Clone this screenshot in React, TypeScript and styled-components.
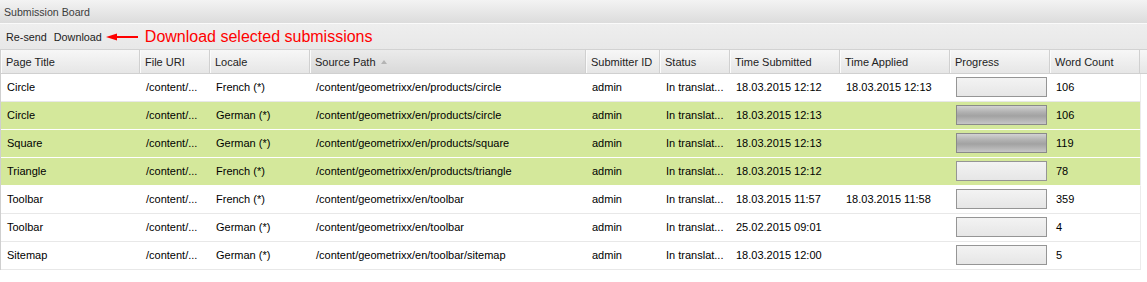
import React from "react";
import styled, { createGlobalStyle } from "styled-components";

const Global = createGlobalStyle`
  html, body { margin: 0; padding: 0; background: #fff; }
  body { font-family: "Liberation Sans", Arial, sans-serif; font-size: 11px; color: #000; }
`;

const COLS = [139, 70, 100, 276, 74, 70, 110, 110, 100, 90];

const Panel = styled.div`
  width: 1147px;
  height: 282px;
  overflow: hidden;
  background: #fff;
`;

const TitleBar = styled.div`
  height: 23px;
  display: flex;
  align-items: center;
  padding-left: 4px;
  background: linear-gradient(#f3f3f3, #dcdcdc);
  border-bottom: 1px solid #fafafa;
  color: #3c3c3c;
  font-size: 10.6px;
`;

const Toolbar = styled.div`
  height: 25px;
  display: flex;
  align-items: center;
  padding-left: 6px;
  background: linear-gradient(#eeeeee, #e8e8e8);
  border-bottom: 1px solid #d2d2d2;
  font-size: 10.8px;
`;

const ToolButton = styled.span`
  color: #222;
  margin-right: 7px;
`;

const Callout = styled.span`
  display: flex;
  align-items: center;
  margin-left: -3px;
`;

const CalloutText = styled.span`
  color: #ff0000;
  font-size: 16px;
  margin-left: 7px;
`;

const Grid = styled.div`
  border-left: 1px solid #cfcfcf;
`;

const HeaderRow = styled.div`
  display: flex;
  height: 23px;
  background: linear-gradient(#f7f7f7, #e6e6e6);
  border-bottom: 1px solid #d0d0d0;
`;

const HeaderCell = styled.div<{ $w: number; $sorted?: boolean }>`
  width: ${(p) => p.$w}px;
  flex: none;
  box-sizing: border-box;
  display: flex;
  align-items: center;
  padding-left: 5px;
  padding-top: 1px;
  color: #222;
  border-right: 1px solid #d0d0d0;
  box-shadow: inset 1px 0 0 #fbfbfb;
  background: ${(p) => (p.$sorted ? "linear-gradient(#ebebeb, #d9d9d9)" : "transparent")};
`;

const SortArrow = styled.span`
  width: 0;
  height: 0;
  margin-left: 5px;
  margin-top: -1px;
  border-left: 3px solid transparent;
  border-right: 3px solid transparent;
  border-bottom: 4px solid #b4b4b4;
`;

const Row = styled.div<{ $sel: boolean }>`
  display: flex;
  width: 1139px;
  height: 27px;
  background: ${(p) => (p.$sel ? "#d4e89b" : "#ffffff")};
  border-bottom: 1px solid ${(p) => (p.$sel ? "#ffffff" : "#e8e8e8")};
  border-right: 1px solid #ececec;
`;

const Cell = styled.div<{ $w: number }>`
  width: ${(p) => p.$w}px;
  flex: none;
  box-sizing: border-box;
  display: flex;
  align-items: center;
  padding-left: 6px;
  padding-bottom: 1px;
  white-space: nowrap;
  overflow: hidden;
  color: #000;
`;

const Progress = styled.div<{ $filled: boolean }>`
  width: 91px;
  height: 20px;
  box-sizing: border-box;
  border: 1px solid ${(p) => (p.$filled ? "#8a8a8a" : "#959595")};
  background: ${(p) =>
    p.$filled
      ? "linear-gradient(#d2d2d2, #b0b0b0 35%, #a2a2a2 55%, #c6c6c6)"
      : "linear-gradient(#f3f3f3, #e6e6e6)"};
`;

type Item = {
  title: string;
  locale: string;
  path: string;
  ts: string;
  ta: string;
  filled: boolean;
  wc: string;
  sel: boolean;
};

const ROWS: Item[] = [
  { title: "Circle", locale: "French (*)", path: "/content/geometrixx/en/products/circle", ts: "18.03.2015 12:12", ta: "18.03.2015 12:13", filled: false, wc: "106", sel: false },
  { title: "Circle", locale: "German (*)", path: "/content/geometrixx/en/products/circle", ts: "18.03.2015 12:13", ta: "", filled: true, wc: "106", sel: true },
  { title: "Square", locale: "German (*)", path: "/content/geometrixx/en/products/square", ts: "18.03.2015 12:13", ta: "", filled: true, wc: "119", sel: true },
  { title: "Triangle", locale: "French (*)", path: "/content/geometrixx/en/products/triangle", ts: "18.03.2015 12:12", ta: "", filled: false, wc: "78", sel: true },
  { title: "Toolbar", locale: "French (*)", path: "/content/geometrixx/en/toolbar", ts: "18.03.2015 11:57", ta: "18.03.2015 11:58", filled: false, wc: "359", sel: false },
  { title: "Toolbar", locale: "German (*)", path: "/content/geometrixx/en/toolbar", ts: "25.02.2015 09:01", ta: "", filled: false, wc: "4", sel: false },
  { title: "Sitemap", locale: "German (*)", path: "/content/geometrixx/en/toolbar/sitemap", ts: "18.03.2015 12:00", ta: "", filled: false, wc: "5", sel: false },
];

const HEADERS = [
  "Page Title",
  "File URI",
  "Locale",
  "Source Path",
  "Submitter ID",
  "Status",
  "Time Submitted",
  "Time Applied",
  "Progress",
  "Word Count",
];

const Arrow = () => (
  <svg width="32" height="10" viewBox="0 0 32 10">
    <polygon points="0,5 11,1.5 11,8.5" fill="#ff0000" />
    <rect x="10" y="4" width="22" height="2" fill="#ff0000" />
  </svg>
);

export default function App() {
  return (
    <Panel>
      <Global />
      <TitleBar>Submission Board</TitleBar>
      <Toolbar>
        <ToolButton>Re-send</ToolButton>
        <ToolButton>Download</ToolButton>
        <Callout>
          <Arrow />
          <CalloutText>Download selected submissions</CalloutText>
        </Callout>
      </Toolbar>
      <Grid>
        <HeaderRow>
          {HEADERS.map((h, i) => (
            <HeaderCell key={h} $w={COLS[i]} $sorted={h === "Source Path"}>
              {h}
              {h === "Source Path" && <SortArrow />}
            </HeaderCell>
          ))}
        </HeaderRow>
        {ROWS.map((r, idx) => (
          <Row key={idx} $sel={r.sel}>
            <Cell $w={COLS[0]}>{r.title}</Cell>
            <Cell $w={COLS[1]}>/content/...</Cell>
            <Cell $w={COLS[2]}>{r.locale}</Cell>
            <Cell $w={COLS[3]}>{r.path}</Cell>
            <Cell $w={COLS[4]}>admin</Cell>
            <Cell $w={COLS[5]}>In translat...</Cell>
            <Cell $w={COLS[6]}>{r.ts}</Cell>
            <Cell $w={COLS[7]}>{r.ta}</Cell>
            <Cell $w={COLS[8]}>
              <Progress $filled={r.filled} />
            </Cell>
            <Cell $w={COLS[9]}>{r.wc}</Cell>
          </Row>
        ))}
      </Grid>
    </Panel>
  );
}
